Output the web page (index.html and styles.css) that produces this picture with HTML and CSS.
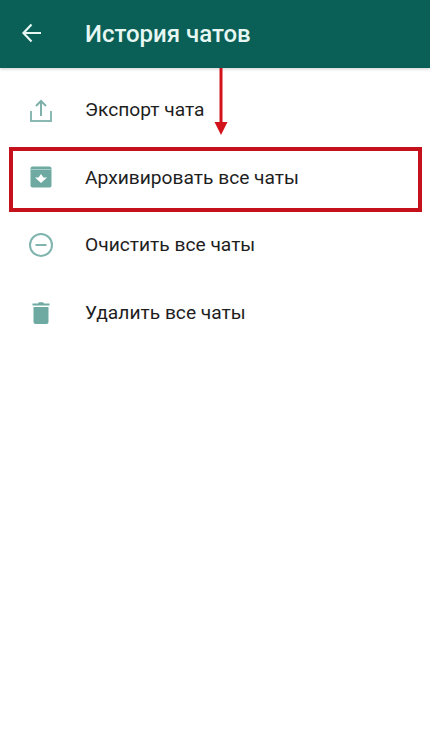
FILE: index.html
```html
<!DOCTYPE html>
<html lang="ru">
<head>
    <meta charset="UTF-8">
    <meta name="viewport" content="width=device-width, initial-scale=1.0">
    <title>История чатов</title>
    <link rel="stylesheet" href="styles.css">
</head>
<body>
    <header class="app-bar">
        <svg class="back-icon" width="24" height="24" viewBox="0 0 24 24">
            <path d="M21 12H4M11.5 3.5L3.5 12l8 8.5" fill="none" stroke="#e6f7f3" stroke-width="2.2"/>
        </svg>
        <h1 class="app-title">История чатов</h1>
    </header>
    <ul class="menu-list">
        <li class="menu-row">
            <svg class="row-icon" width="28" height="28" viewBox="0 0 28 28">
                <path d="M4 15v10h20V15" fill="none" stroke="#8ab8b2" stroke-width="2"/>
                <path d="M14 20V5M9 10l5-5 5 5" fill="none" stroke="#7fb0aa" stroke-width="2"/>
            </svg>
            <span class="row-label">Экспорт чата</span>
        </li>
        <li class="menu-row">
            <svg class="row-icon" width="28" height="28" viewBox="0 0 28 28">
                <rect x="3.5" y="3.5" width="21" height="21" rx="2" fill="#6eaaa2"/>
                <path d="M3.5 6.5h21" stroke="#a9cdc8" stroke-width="1"/>
                <path d="M14 20l-6-5.5h3.5L14 11l2.5 3.5H20z" fill="#fff"/>
            </svg>
            <span class="row-label">Архивировать все чаты</span>
        </li>
        <li class="menu-row">
            <svg class="row-icon" width="28" height="28" viewBox="0 0 28 28">
                <circle cx="14" cy="14" r="11" fill="none" stroke="#7fb5ae" stroke-width="2"/>
                <path d="M8.5 14h11" stroke="#7fb5ae" stroke-width="2"/>
            </svg>
            <span class="row-label">Очистить все чаты</span>
        </li>
        <li class="menu-row">
            <svg class="row-icon" width="28" height="28" viewBox="0 0 28 28">
                <path d="M6.5 9h15v15a2 2 0 0 1-2 2h-11a2 2 0 0 1-2-2z" fill="#6eaaa2"/>
                <path d="M5.5 5.5h5.5L12 4.2h4l1 1.3h5.5v2h-17z" fill="#6eaaa2"/>
            </svg>
            <span class="row-label">Удалить все чаты</span>
        </li>
    </ul>

    <div class="highlight-box"></div>
    <svg class="red-arrow" width="14" height="68" viewBox="0 0 14 68">
        <path d="M7 0v56" stroke="#d3131b" stroke-width="3"/>
        <path d="M0.5 54h13L7 67z" fill="#d3131b"/>
    </svg>
</body>
</html>
```

FILE: styles.css
```css
body {
    margin: 0;
    background-color: #fff;
    font-family: Roboto, "Liberation Sans", sans-serif;
    color: #1e1e1e;
    position: relative;
    min-height: 740px;
    overflow: hidden;
}
.app-bar {
    height: 68px;
    display: flex;
    align-items: center;
    background-color: #0a5f56;
    padding-left: 20px;
    gap: 41px;
    box-shadow: 0 1px 3px rgba(0, 0, 0, 0.2);
}
.back-icon {
    flex: none;
    margin-top: -2px;
}
.app-title {
    margin: 0;
    font-size: 24px;
    font-weight: 500;
    color: #e6f7f3;
    margin-top: -1px;
}
.menu-list {
    list-style: none;
    margin: 0;
    padding: 8px 0 0;
}
.menu-row {
    height: 67.5px;
    display: flex;
    align-items: center;
    padding-left: 27px;
    gap: 30px;
}
.row-icon {
    flex: none;
}
.row-label {
    font-size: 19.2px;
}
.highlight-box {
    position: absolute;
    left: 9px;
    top: 147px;
    width: 405px;
    height: 57px;
    border: 4px solid #c5111b;
}
.red-arrow {
    position: absolute;
    left: 214px;
    top: 68px;
}
```
